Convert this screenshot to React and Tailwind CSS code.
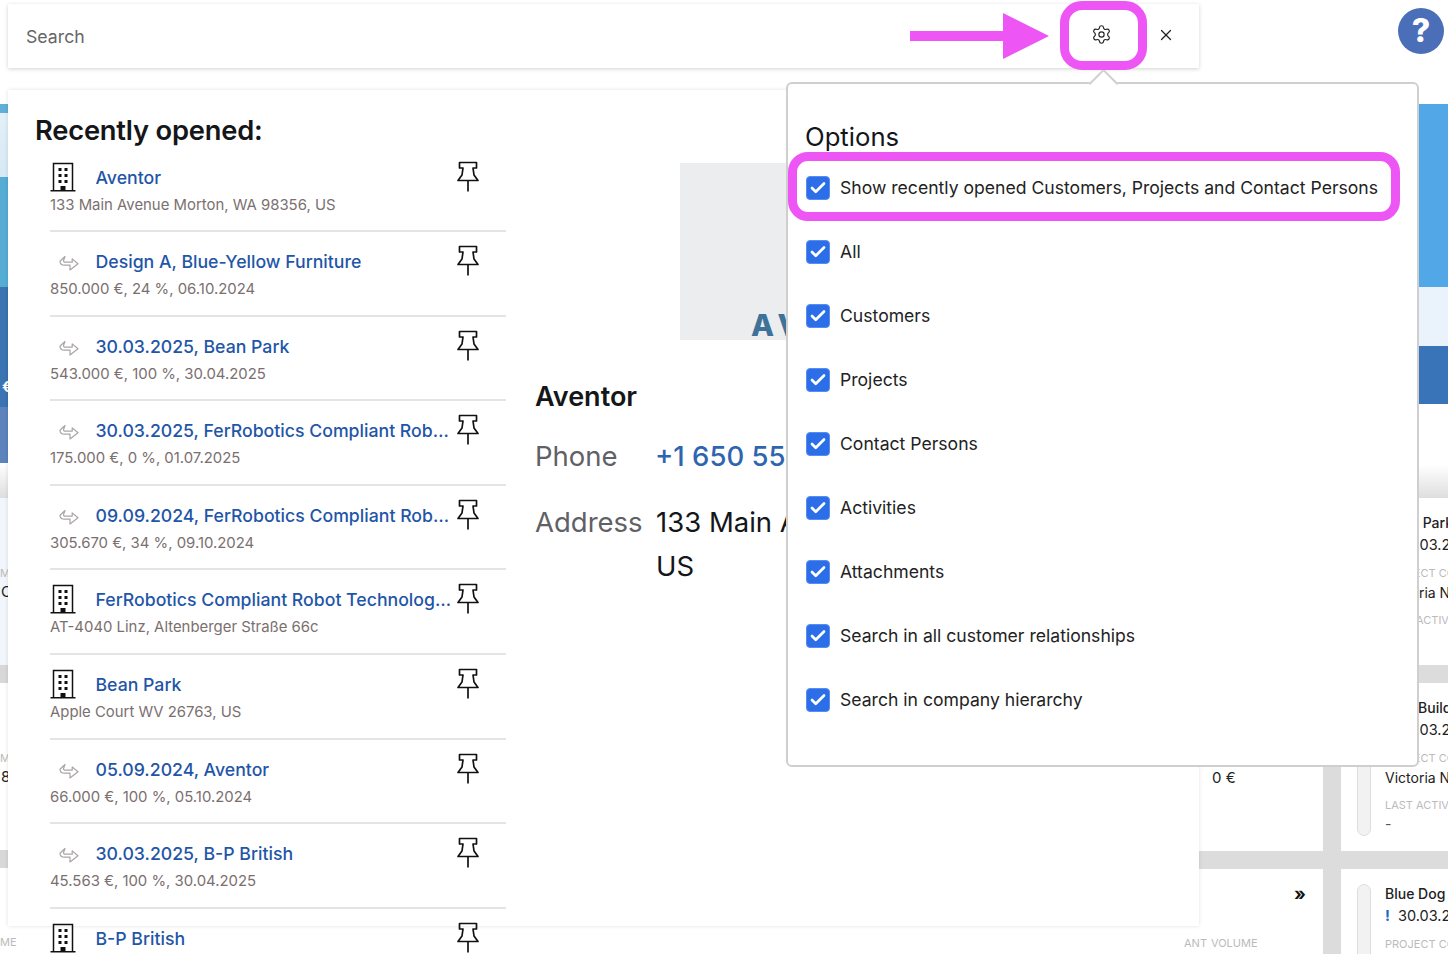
import { Check, Settings, X } from "lucide-react"

const recent = [
  { type: "company", title: "Aventor", sub: "133 Main Avenue Morton, WA 98356, US" },
  { type: "link", title: "Design A, Blue-Yellow Furniture", sub: "850.000 €, 24 %, 06.10.2024" },
  { type: "link", title: "30.03.2025, Bean Park", sub: "543.000 €, 100 %, 30.04.2025" },
  { type: "link", title: "30.03.2025, FerRobotics Compliant Robot Technology", sub: "175.000 €, 0 %, 01.07.2025" },
  { type: "link", title: "09.09.2024, FerRobotics Compliant Robot Technology", sub: "305.670 €, 34 %, 09.10.2024" },
  { type: "company", title: "FerRobotics Compliant Robot Technology GmbH", sub: "AT-4040 Linz, Altenberger Straße 66c" },
  { type: "company", title: "Bean Park", sub: "Apple Court WV 26763, US" },
  { type: "link", title: "05.09.2024, Aventor", sub: "66.000 €, 100 %, 05.10.2024" },
  { type: "link", title: "30.03.2025, B-P British", sub: "45.563 €, 100 %, 30.04.2025" },
  { type: "company", title: "B-P British", sub: "" },
]

const options = [
  "Show recently opened Customers, Projects and Contact Persons",
  "All",
  "Customers",
  "Projects",
  "Contact Persons",
  "Activities",
  "Attachments",
  "Search in all customer relationships",
  "Search in company hierarchy",
]

function BuildingIcon() {
  return (
    <svg width="26" height="30" viewBox="0 0 26 30" className="text-[#111]">
      <path d="M3.5 28.5V1.5h19v27" fill="none" stroke="currentColor" strokeWidth="1.5" />
      <path d="M0.5 28.75h25" stroke="currentColor" strokeWidth="1.5" />
      <path d="M8.5 6h3v3h-3zM14.5 6h3v3h-3zM8.5 12h3v3h-3zM14.5 12h3v3h-3zM8.5 18h3v3h-3zM14.5 18h3v3h-3zM10.5 24h5v4h-5z" fill="currentColor" />
    </svg>
  )
}

function LinkIcon() {
  return (
    <svg width="20" height="17" viewBox="0 0 20 17" fill="none" stroke="#aaa5a5" strokeWidth="1.2" strokeLinejoin="round">
      <path d="M6 1.5 1 6.2c0 2.6 1.8 4 4.5 4H11V15l8-6.3-5.8-4.8v3.3H6.5C5 7.2 4.3 6.6 4.6 5.4L6 1.5z" />
    </svg>
  )
}

function PinIcon() {
  return (
    <svg width="24" height="31" viewBox="0 0 24 31" fill="none" stroke="#111" strokeWidth="1.7" strokeLinejoin="round" className="shrink-0">
      <path d="M3.5 1.5H20.5V7H17L18 14L22 19.5H2L6 14L7 7H3.5Z" />
      <path d="M12 19.5V30.5" />
    </svg>
  )
}

function RecentRow({ item, last }) {
  return (
    <div className={`h-[84.6px] shrink-0 ml-[42px] w-[456px] pt-[14px] ${last ? "" : "border-b-2 border-[#e4e4e4]"}`}>
      <div className="flex items-start h-[30px]">
        <span className="w-[45.5px] h-[30px] shrink-0 flex items-center">
          {item.type === "company" ? (
            <BuildingIcon />
          ) : (
            <span className="ml-[9px] mt-[5px]">
              <LinkIcon />
            </span>
          )}
        </span>
        <span className="w-[356px] truncate text-[17.7px] font-medium leading-[31px] text-[#1f56a8]">{item.title}</span>
        <span className="ml-[4.5px] -mt-px">
          <PinIcon />
        </span>
      </div>
      <div className="mt-[3px] text-[14.9px] leading-5 text-[#7b7070]">{item.sub}</div>
    </div>
  )
}

// Checkbox row in the options popover
function OptionRow({ label }) {
  return (
    <div className="flex items-center h-6 gap-[10px]">
      <span className="w-6 h-6 rounded-[4px] bg-[#2b6ee8] border border-[#5b8df0] flex items-center justify-center shrink-0">
        <Check size={18} strokeWidth={3.6} className="text-white" />
      </span>
      <span className="text-[17.6px] leading-6 whitespace-nowrap text-[#222]">{label}</span>
    </div>
  )
}

function BoardCard({ title, contact, empty, last }) {
  return (
    <div className="bg-white overflow-hidden flex gap-[14px] pl-4 pt-[15px] min-w-0">
      <div className={`w-[14px] h-[138px] shrink-0 bg-[#f2f2f2] border border-[#ddd] ${last ? "rounded-t-[7px]" : "rounded-[7px]"}`} />
      <div className="whitespace-nowrap">
        <div className="h-5 text-[14px] leading-5 font-medium text-[#222]">{title}</div>
        <div className="mt-[2px] h-5 text-[14.5px] leading-5 text-[#222] flex">
          <span className="w-[13px] font-bold text-[#1f66c4]">!</span>
          <span>30.03.2025</span>
        </div>
        <div className="mt-[11px] text-[11px] leading-[14px] text-[#bbb]">PROJECT CONTACT</div>
        {!last && (
          <>
            <div className="mt-[4px] text-[14px] leading-[18px] text-[#222]">{contact}</div>
            <div className="mt-[11px] text-[11px] leading-[14px] text-[#bbb]">LAST ACTIVITY</div>
            {empty && <div className="mt-[3px] text-[14px] leading-[18px] text-[#555]">-</div>}
          </>
        )}
      </div>
    </div>
  )
}

// Board behind the search overlay, only its edges stay visible
function Background() {
  return (
    <div className="absolute inset-0 bg-white overflow-hidden flex justify-between">
      <div className="w-5 flex flex-col overflow-hidden whitespace-nowrap">
        <div className="h-[104px] shrink-0" />
        <div className="h-[9px] shrink-0 bg-[#5fb0d9]" />
        <div className="h-[64px] shrink-0 bg-gradient-to-b from-[#e3f0f7] to-[#d6e9f4]" />
        <div className="h-[110px] shrink-0 bg-[#55add3]" />
        <div className="h-[120px] shrink-0 bg-[#3a74b2] pt-[90px] pl-[2px] text-[15px] leading-5 font-bold text-white">€</div>
        <div className="h-[56px] shrink-0 bg-[#5c83bc]" />
        <div className="h-[35px] shrink-0 bg-gradient-to-b from-white to-[#dedede]" />
        <div className="h-[167px] shrink-0 bg-[#f0f6fb] pt-[68px]">
          <div className="text-[11px] leading-[14px] text-[#bbb]">M</div>
          <div className="mt-[3px] pl-px text-[15px] leading-[18px] text-[#222]">C</div>
        </div>
        <div className="h-[18px] shrink-0 bg-[#d8d8d8]" />
        <div className="h-[167px] shrink-0 pt-[68px]">
          <div className="text-[11px] leading-[14px] text-[#bbb]">M</div>
          <div className="mt-[3px] pl-px text-[15px] leading-[18px] text-[#222]">8</div>
        </div>
        <div className="h-[18px] shrink-0 bg-[#d8d8d8]" />
        <div className="pt-[67px] text-[11px] leading-[14px] text-[#bbb]">ME</div>
      </div>

      <div className="w-[298px] flex flex-col">
        <div className="h-[104px] shrink-0" />
        <div className="h-[183px] shrink-0 bg-[#52a7e6]" />
        <div className="h-[59px] shrink-0 bg-[#eaf3fb]" />
        <div className="h-[58px] shrink-0 bg-[#3a74b8]" />
        <div className="h-[61px] shrink-0" />
        <div className="h-[33px] shrink-0 bg-gradient-to-b from-white to-[#dedede]" />
        <div className="flex-1 grid grid-cols-[173px_107px] grid-rows-[167px_168px_85px] gap-[18px] bg-[#dcdcdc]">
          <div className="bg-white" />
          <BoardCard title="Bean Park" contact="Victoria Novak" empty />
          <div className="bg-white pl-[62px] pt-[86px] text-[15px] leading-[18px] text-[#222]">0 €</div>
          <BoardCard title="Blue Building" contact="Victoria Novak" empty />
          <div className="bg-white pl-[34px] flex flex-col">
            <div className="pl-[110px] pt-[15px] text-[18px] leading-5 font-bold text-[#111]">»</div>
            <div className="mt-[32px] flex gap-[4px] text-[11px] leading-[14px] text-[#bbb] whitespace-nowrap">
              <span>ANT</span>
              <span>VOLUME</span>
            </div>
          </div>
          <BoardCard title="Blue Dog" last />
        </div>
      </div>
    </div>
  )
}

export default function App() {
  return (
    <div className="relative w-[1448px] h-[954px] overflow-hidden font-['Inter','Liberation_Sans',sans-serif]">
      <Background />

      <div className="relative flex flex-col pl-2 pt-1">
        <div className="flex items-start">
          {/* search bar */}
          <div className="w-[1191px] h-16 bg-white shadow-[0_1px_4px_rgba(0,0,0,0.18)] flex items-center pl-[18px] pr-6 text-[#222]">
            <span className="mt-[2px] text-[17.7px] text-[#666]">Search</span>
            <span className="ml-auto -mt-[3px]">
              <Settings size={21} strokeWidth={1.3} />
            </span>
            <span className="ml-[45px] -mt-[2px]">
              <X size={18} strokeWidth={1.6} />
            </span>
          </div>
          {/* help button */}
          <div className="ml-[199px] mt-1 w-[46px] h-[46px] shrink-0 rounded-full bg-[#4a6eb8] flex items-center justify-center text-[32px] leading-none font-extrabold text-white">?</div>
        </div>

        {/* results panel, the list runs past its bottom edge */}
        <div className="mt-[22px] w-[1191px] h-[836px] bg-white shadow-[0_0_4px_rgba(0,0,0,0.12)] flex">
          <div className="w-[520px] shrink-0 flex flex-col">
            <h2 className="ml-[27px] mt-[23px] text-[27.3px] leading-9 font-semibold text-[#14161a] tracking-[-0.2px]">Recently opened:</h2>
            <div className="flex flex-col -mt-[1.5px]">
              {recent.map((item, i) => (
                <RecentRow key={i} item={item} last={i === recent.length - 1} />
              ))}
            </div>
          </div>

          {/* company preview, its right part lies under the popover */}
          <div className="ml-[7px] w-[640px] pt-[73px] whitespace-nowrap">
            <div className="ml-[145px] w-[240px] h-[177px] bg-[#ecedef] flex items-end pl-[71px] overflow-hidden">
              <span className="-mb-[3px] text-[30px] leading-9 font-extrabold tracking-[6px] text-[#3e7299]">AVENTOR</span>
            </div>
            <div className="mt-[39px] text-[27px] leading-9 font-semibold text-[#14161a]">Aventor</div>
            <div className="flex mt-[23px]">
              <span className="w-[120px] shrink-0 text-[27.5px] leading-9 text-[#5f6166]">Phone</span>
              <span className="text-[27.5px] leading-9 font-medium text-[#2f65ae]">+1 650 555 0100</span>
            </div>
            <div className="flex mt-[30px]">
              <span className="w-[121px] shrink-0 text-[27.5px] leading-9 text-[#5f6166]">Address</span>
              <span className="text-[27.5px] leading-[44px] -mt-[4px] text-[#14161a]">
                133 Main Avenue Morton, WA 98356,
                <br />
                US
              </span>
            </div>
          </div>
        </div>
      </div>

      {/* options popover */}
      <div className="absolute left-[786px] top-[82px] w-[633px] h-[685px] bg-white border-2 border-[#cfcfcf] rounded-[6px] pl-[18px]">
        <span className="absolute left-[304.5px] top-[-11.5px] w-[21px] h-[21px] rotate-45 bg-white border-l-2 border-t-2 border-[#cfcfcf]" />
        <h3 className="relative -ml-px mt-[35px] text-[25.7px] leading-9 text-[#14161a]">Options</h3>
        <div className="relative mt-[21px] flex flex-col gap-10">
          {options.map((label) => (
            <OptionRow key={label} label={label} />
          ))}
        </div>
      </div>

      {/* magenta annotations */}
      <div className="absolute left-[1060px] top-[1px] w-[87px] h-[69px] rounded-[22px] border-[9px] border-[#ee55f5]" />
      <div className="absolute left-[788px] top-[152px] w-[612px] h-[69px] rounded-[20px] border-[9px] border-[#ee55f5]" />
      <div className="absolute left-[910px] top-[13px] flex items-center">
        <div className="w-[93px] h-[10px] bg-[#ee55f5]" />
        <svg width="46" height="46" viewBox="0 0 46 46">
          <path d="M0 0 46 23 0 46z" fill="#ee55f5" />
        </svg>
      </div>
    </div>
  )
}
